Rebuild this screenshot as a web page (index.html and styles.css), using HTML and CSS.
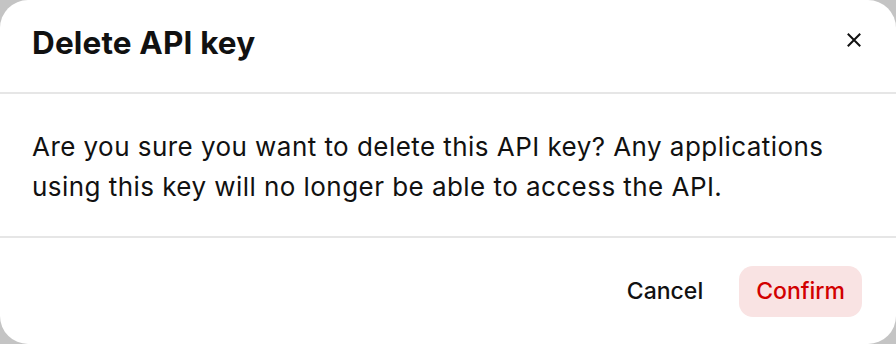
FILE: index.html
```html
<!DOCTYPE html>
<html lang="en">
<head>
<meta charset="utf-8">
<title>Delete API key</title>
<link rel="stylesheet" href="styles.css">
</head>
<body>
<div class="dialog" role="dialog" aria-labelledby="dlg-title">
  <header class="dialog-header">
    <h2 id="dlg-title" class="dialog-title">Delete API key</h2>
    <button class="close-btn" aria-label="Close">
      <svg width="14" height="14" viewBox="0 0 14 14" fill="none" stroke="#111" stroke-width="2" stroke-linecap="square"><path d="M1.5 1.5L12.5 12.5M12.5 1.5L1.5 12.5"/></svg>
    </button>
  </header>
  <div class="dialog-body">
    <p>Are you sure you want to delete this API key? Any applications using this key will no longer be able to access the API.</p>
  </div>
  <footer class="dialog-footer">
    <button class="btn btn-ghost">Cancel</button>
    <button class="btn btn-danger">Confirm</button>
  </footer>
</div>
</body>
</html>
```
FILE: styles.css
```css
html, body {
  margin: 0;
  padding: 0;
  height: 100%;
}
body {
  background: #c4c4c4;
  font-family: Inter, "Noto Sans", sans-serif;
  color: #111;
}
.dialog {
  box-sizing: border-box;
  width: 896px;
  height: 344px;
  background: #fff;
  border-radius: 28px;
  display: flex;
  flex-direction: column;
  overflow: hidden;
}
.dialog-header {
  height: 92px;
  flex: none;
  display: flex;
  align-items: center;
  justify-content: space-between;
  padding: 0 26px 0 32px;
  border-bottom: 2px solid #e6e6e6;
}
.dialog-title {
  margin: 0;
  font-size: 31.5px;
  font-weight: 700;
  letter-spacing: 0.15px;
  line-height: 40px;
  padding-bottom: 6px;
}
.close-btn {
  width: 32px;
  height: 32px;
  border: 0;
  background: transparent;
  padding: 0;
  display: flex;
  align-items: center;
  justify-content: center;
  margin-top: -12px;
  cursor: pointer;
}
.dialog-body {
  height: 144px;
  box-sizing: border-box;
  flex: none;
  padding: 33px 32px 0;
  border-bottom: 2px solid #e6e6e6;
}
.dialog-body p {
  margin: 0;
  font-size: 26px;
  letter-spacing: 0.45px;
  line-height: 40px;
  color: #111;
}
.dialog-footer {
  flex: 1;
  display: flex;
  align-items: center;
  justify-content: flex-end;
  gap: 19px;
  padding: 0 34px 0 0;
}
.btn {
  font-family: inherit;
  font-size: 23px;
  font-weight: 500;
  height: 51px;
  padding: 0 17px;
  border: 0;
  border-radius: 14px;
  background: transparent;
  cursor: pointer;
}
.btn-ghost {
  color: #111;
}
.btn-danger {
  background: #f9e3e3;
  color: #d20000;
}
```
